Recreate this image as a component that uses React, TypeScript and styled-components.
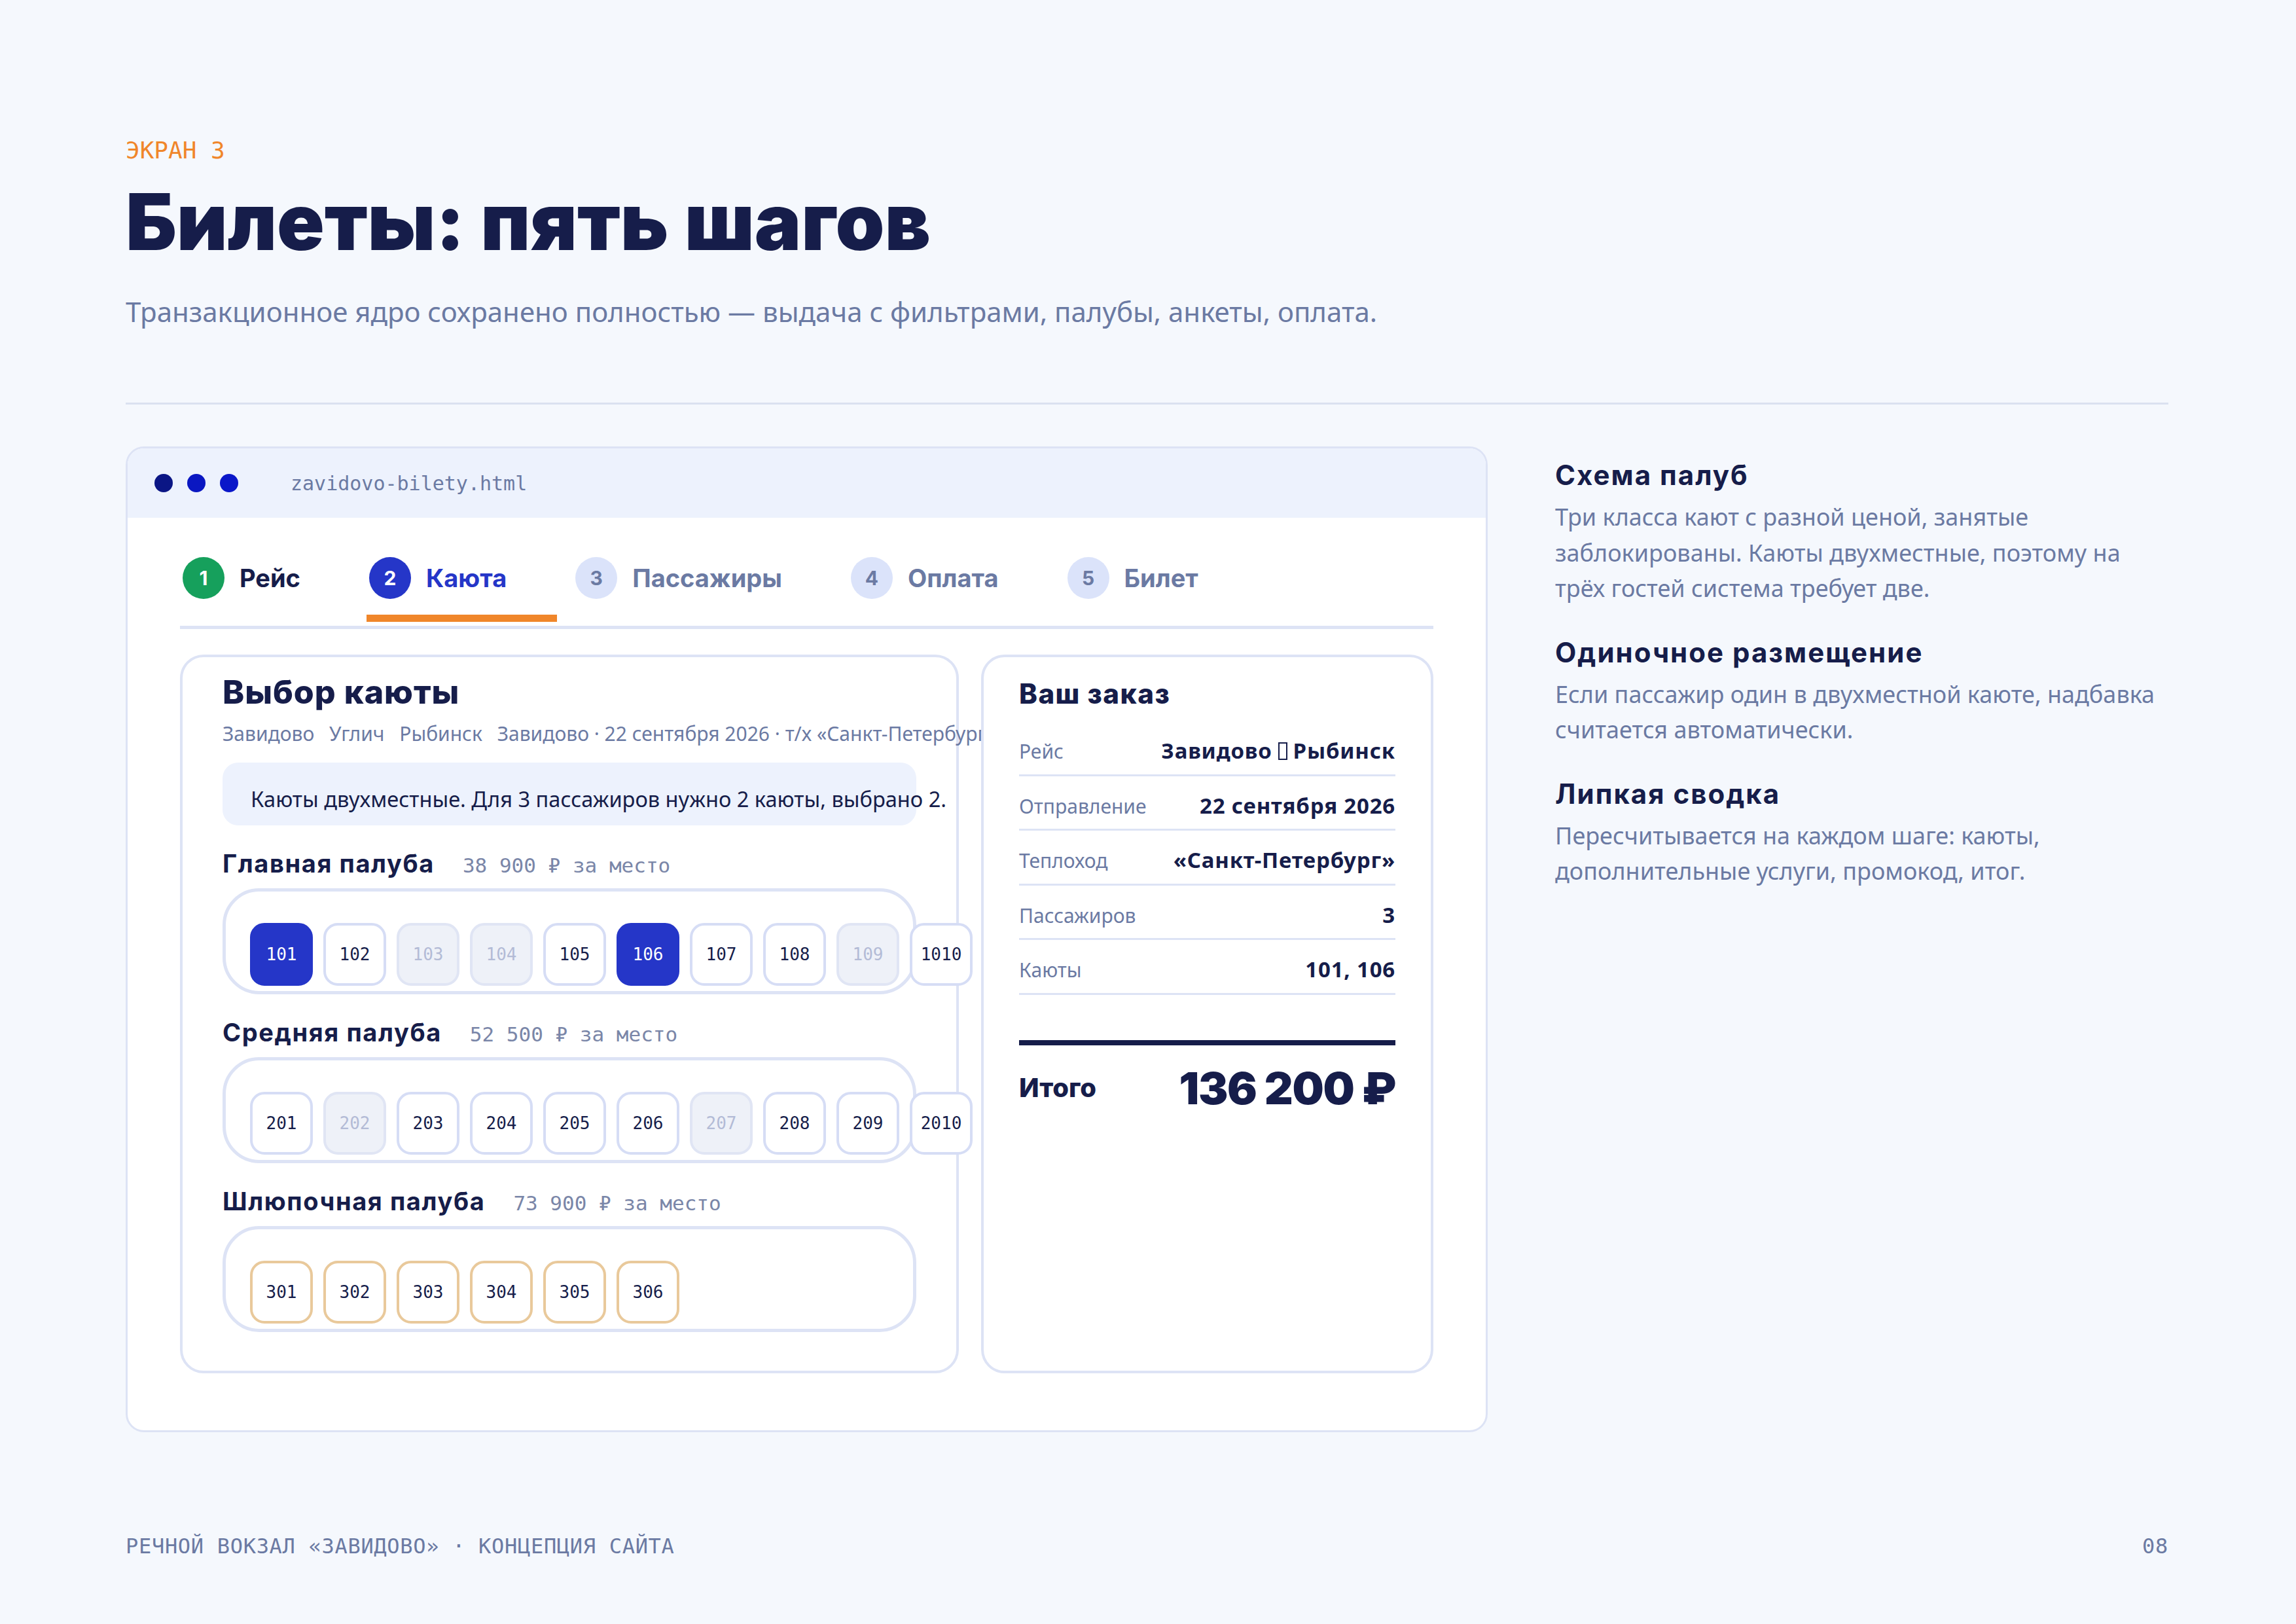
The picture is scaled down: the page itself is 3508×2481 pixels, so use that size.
import styled, { createGlobalStyle, css } from "styled-components";

const HEAD = `Inter, "Noto Sans", sans-serif`;
const BODY = `"Noto Sans", "Open Sans", sans-serif`;
const MONO = `"DejaVu Sans Mono", "Liberation Mono", monospace`;

const NAVY = "#161d4a";
const MUTED = "#6b7aa3";
const LINE = "#dde3f5";
const BLUE = "#2536c8";
const ORANGE = "#f0862a";

type StepState = "done" | "active" | "todo";
type CabinState = "free" | "taken" | "picked" | "gold";

interface Deck {
  name: string;
  price: string;
  cabins: { num: string; state: CabinState }[];
}

const steps: { n: number; label: string; state: StepState }[] = [
  { n: 1, label: "Рейс", state: "done" },
  { n: 2, label: "Каюта", state: "active" },
  { n: 3, label: "Пассажиры", state: "todo" },
  { n: 4, label: "Оплата", state: "todo" },
  { n: 5, label: "Билет", state: "todo" },
];

// номер каюты всегда собирается как палуба + "0" + порядковый
const makeCabins = (
  deck: number,
  count: number,
  taken: number[],
  picked: number[],
  base: CabinState = "free"
) =>
  Array.from({ length: count }, (_, i) => {
    const n = i + 1;
    let state: CabinState = base;
    if (taken.includes(n)) state = "taken";
    if (picked.includes(n)) state = "picked";
    return { num: `${deck}0${n}`, state };
  });

const decks: Deck[] = [
  {
    name: "Главная палуба",
    price: "38 900 ₽ за место",
    cabins: makeCabins(1, 10, [3, 4, 9], [1, 6]),
  },
  {
    name: "Средняя палуба",
    price: "52 500 ₽ за место",
    cabins: makeCabins(2, 10, [2, 7], []),
  },
  {
    name: "Шлюпочная палуба",
    price: "73 900 ₽ за место",
    cabins: makeCabins(3, 6, [], [], "gold"),
  },
];

const GlobalStyle = createGlobalStyle`
  * { box-sizing: border-box; }
  html, body {
    margin: 0;
    padding: 0;
    background: #f5f8fd;
  }
  body {
    width: 3508px;
    height: 2481px;
    overflow: hidden;
    font-family: ${BODY};
    color: ${NAVY};
  }
`;

const Page = styled.div`
  width: 3508px;
  height: 2481px;
  padding: 208px 195px 0 192px;
  display: flex;
  flex-direction: column;
`;

const Eyebrow = styled.div`
  font-family: ${MONO};
  font-size: 36px;
  line-height: 44px;
  color: ${ORANGE};
`;

const Title = styled.h1`
  margin: 27px 0 0;
  font-family: ${HEAD};
  font-weight: 900;
  font-size: 120px;
  line-height: 120px;
  letter-spacing: 0;
  color: ${NAVY};
`;

const Lead = styled.p`
  margin: 49px 0 0;
  font-size: 42px;
  line-height: 56px;
  color: ${MUTED};
`;

const Rule = styled.div`
  margin-top: 111px;
  height: 3px;
  background: #dbe1f0;
`;

const Main = styled.div`
  margin-top: 64px;
  display: flex;
  gap: 103px;
  align-items: flex-start;
`;

const Browser = styled.div`
  width: 2081px;
  flex-shrink: 0;
  background: #fff;
  border: 3px solid ${LINE};
  border-radius: 28px;
  overflow: hidden;
`;

const BrowserBar = styled.div`
  height: 106px;
  background: #edf2fd;
  display: flex;
  align-items: center;
  padding-left: 41px;
`;

const Dots = styled.div`
  display: flex;
  gap: 22px;
`;

const Dot = styled.span<{ $color: string }>`
  width: 28px;
  height: 28px;
  border-radius: 50%;
  background: ${(p) => p.$color};
`;

const Url = styled.span`
  margin-left: 80px;
  font-family: ${MONO};
  font-size: 30px;
  color: ${MUTED};
`;

const BrowserBody = styled.div`
  padding: 60px 80px 87px;
`;

const Steps = styled.div`
  display: flex;
  gap: 24px;
  border-bottom: 5px solid ${LINE};
`;

const Step = styled.div<{ $state: StepState }>`
  position: relative;
  display: flex;
  align-items: center;
  gap: 23px;
  padding: 0 77px 41px 4px;

  ${(p) =>
    p.$state === "active" &&
    css`
      &::after {
        content: "";
        position: absolute;
        left: 0;
        right: 0;
        bottom: 6px;
        height: 11px;
        background: ${ORANGE};
      }
    `}
`;

const circleColors: Record<StepState, [string, string]> = {
  done: ["#16a05c", "#fff"],
  active: [BLUE, "#fff"],
  todo: ["#dbe3fa", MUTED],
};

const labelColors: Record<StepState, string> = {
  done: NAVY,
  active: BLUE,
  todo: MUTED,
};

const StepCircle = styled.span<{ $state: StepState }>`
  width: 64px;
  height: 64px;
  border-radius: 50%;
  display: flex;
  align-items: center;
  justify-content: center;
  font-family: ${HEAD};
  font-weight: 700;
  font-size: 30px;
  background: ${(p) => circleColors[p.$state][0]};
  color: ${(p) => circleColors[p.$state][1]};
`;

const StepLabel = styled.span<{ $state: StepState }>`
  font-family: ${HEAD};
  font-weight: 700;
  font-size: 38px;
  line-height: 1;
  color: ${(p) => labelColors[p.$state]};
`;

const Cards = styled.div`
  margin-top: 39px;
  display: flex;
  gap: 34px;
`;

const CabinCard = styled.div`
  width: 1190px;
  flex-shrink: 0;
  border: 4px solid ${LINE};
  border-radius: 36px;
  padding: 27px 61px 59px;
  background: #fff;
`;

const CardTitle = styled.h2`
  margin: 0;
  font-family: ${HEAD};
  font-weight: 800;
  font-size: 50px;
  line-height: 52px;
  letter-spacing: 1px;
  color: ${NAVY};
`;

const Route = styled.div`
  margin-top: 18px;
  font-size: 30px;
  line-height: 40px;
  color: ${MUTED};
  white-space: pre;
`;

const Notice = styled.div`
  margin-top: 24px;
  padding: 34px 43px 18px;
  background: #edf2fd;
  border-radius: 24px;
  font-size: 32.6px;
  line-height: 44px;
  white-space: nowrap;
  color: ${NAVY};
`;

const DeckHead = styled.div`
  margin-top: 34px;
  display: flex;
  align-items: baseline;
  gap: 43px;
`;

const DeckName = styled.span`
  font-family: ${HEAD};
  font-weight: 700;
  font-size: 38px;
  line-height: 48px;
  letter-spacing: 1.6px;
  color: ${NAVY};
`;

const DeckPrice = styled.span`
  font-family: ${MONO};
  font-size: 31px;
  color: #7a86a8;
`;

const DeckBox = styled.div`
  margin-top: 14px;
  border: 5px solid ${LINE};
  border-radius: 56px;
  padding: 48px 37px 8px;
  display: flex;
  gap: 16px;
`;

const cabinLook: Record<CabinState, ReturnType<typeof css>> = {
  free: css`
    background: #fff;
    border-color: #d6ddf5;
    color: ${NAVY};
  `,
  taken: css`
    background: #eef1f8;
    border-color: #e0e5f4;
    color: #b3bbd6;
  `,
  picked: css`
    background: ${BLUE};
    border-color: ${BLUE};
    color: #fff;
  `,
  gold: css`
    background: #fff;
    border-color: #e9c99b;
    color: ${NAVY};
  `,
};

const Cabin = styled.div<{ $state: CabinState }>`
  width: 96px;
  height: 96px;
  flex-shrink: 0;
  border: 4px solid;
  border-radius: 22px;
  display: flex;
  align-items: center;
  justify-content: center;
  font-family: ${MONO};
  font-size: 26px;
  ${(p) => cabinLook[p.$state]}
`;

const OrderCard = styled.div`
  position: relative;
  flex: 1;
  border: 4px solid ${LINE};
  border-radius: 36px;
  padding: 32px 54px;
  background: #fff;
`;

const OrderTitle = styled.h3`
  margin: 0 0 18px;
  font-family: ${HEAD};
  font-weight: 800;
  font-size: 42px;
  line-height: 48px;
  letter-spacing: 1.5px;
  color: ${NAVY};
`;

const Row = styled.div`
  display: flex;
  justify-content: space-between;
  align-items: baseline;
  padding: 25px 0 14.5px;
  line-height: 40px;
  border-bottom: 3px solid ${LINE};
`;

const RowLabel = styled.span`
  font-size: 30px;
  color: ${MUTED};
`;

const RowValue = styled.span`
  font-size: 33px;
  font-weight: 700;
  letter-spacing: 0.8px;
  color: ${NAVY};
`;

const Tofu = styled.span`
  display: inline-block;
  width: 14px;
  height: 27px;
  margin: 0 9px;
  border: 2px solid ${NAVY};
  vertical-align: -2px;
`;

const Total = styled.div`
  margin-top: 69px;
  border-top: 8px solid ${NAVY};
  padding-top: 25px;
  display: flex;
  justify-content: space-between;
  align-items: center;
`;

const TotalLabel = styled.span`
  font-family: ${HEAD};
  font-weight: 800;
  font-size: 40px;
  color: ${NAVY};
`;

const TotalValue = styled.span`
  font-family: ${HEAD};
  font-weight: 900;
  font-size: 68px;
  line-height: 80px;
  letter-spacing: -0.02em;
  color: ${NAVY};
`;

const Notes = styled.div`
  width: 937px;
  padding-top: 20px;
  display: flex;
  flex-direction: column;
  gap: 46px;
`;

const NoteTitle = styled.h4`
  margin: 0;
  font-family: ${HEAD};
  font-weight: 700;
  font-size: 42px;
  line-height: 48px;
  letter-spacing: 2px;
  color: ${NAVY};
`;

const NoteText = styled.p`
  margin: 13px 0 0;
  font-size: 36px;
  line-height: 54.5px;
  color: ${MUTED};
`;

const Footer = styled.div`
  margin-top: 154px;
  display: flex;
  justify-content: space-between;
  font-family: ${MONO};
  font-size: 32px;
  line-height: 40px;
  letter-spacing: 0.7px;
  color: ${MUTED};
`;

const orderRows: [string, React.ReactNode][] = [
  [
    "Рейс",
    <>
      Завидово
      <Tofu />
      Рыбинск
    </>,
  ],
  ["Отправление", "22 сентября 2026"],
  ["Теплоход", "«Санкт-Петербург»"],
  ["Пассажиров", "3"],
  ["Каюты", "101, 106"],
];

const notes = [
  {
    title: "Схема палуб",
    text: "Три класса кают с разной ценой, занятые заблокированы. Каюты двухместные, поэтому на трёх гостей система требует две.",
  },
  {
    title: "Одиночное размещение",
    text: "Если пассажир один в двухместной каюте, надбавка считается автоматически.",
  },
  {
    title: "Липкая сводка",
    text: "Пересчитывается на каждом шаге: каюты, дополнительные услуги, промокод, итог.",
  },
];

export default function App() {
  return (
    <>
      <GlobalStyle />
      <Page>
        <Eyebrow>ЭКРАН 3</Eyebrow>
        <Title>Билеты: пять шагов</Title>
        <Lead>
          Транзакционное ядро сохранено полностью — выдача с фильтрами, палубы,
          анкеты, оплата.
        </Lead>
        <Rule />

        <Main>
          <Browser>
            <BrowserBar>
              <Dots>
                <Dot $color="#0b1685" />
                <Dot $color="#0a17c2" />
                <Dot $color="#0a17c9" />
              </Dots>
              <Url>zavidovo-bilety.html</Url>
            </BrowserBar>

            <BrowserBody>
              <Steps>
                {steps.map((s) => (
                  <Step key={s.n} $state={s.state}>
                    <StepCircle $state={s.state}>{s.n}</StepCircle>
                    <StepLabel $state={s.state}>{s.label}</StepLabel>
                  </Step>
                ))}
              </Steps>

              <Cards>
                <CabinCard>
                  <CardTitle>Выбор каюты</CardTitle>
                  <Route>
                    {"Завидово\u2002 Углич\u2002 Рыбинск\u2002 Завидово · 22 сентября 2026 · т/х «Санкт-Петербург»"}
                  </Route>
                  <Notice>
                    Каюты двухместные. Для 3 пассажиров нужно 2 каюты, выбрано 2.
                  </Notice>
                  {decks.map((d) => (
                    <div key={d.name}>
                      <DeckHead>
                        <DeckName>{d.name}</DeckName>
                        <DeckPrice>{d.price}</DeckPrice>
                      </DeckHead>
                      <DeckBox>
                        {d.cabins.map((c) => (
                          <Cabin key={c.num} $state={c.state}>
                            {c.num}
                          </Cabin>
                        ))}
                      </DeckBox>
                    </div>
                  ))}
                </CabinCard>

                <OrderCard>
                  <OrderTitle>Ваш заказ</OrderTitle>
                  {orderRows.map(([label, value]) => (
                    <Row key={label}>
                      <RowLabel>{label}</RowLabel>
                      <RowValue>{value}</RowValue>
                    </Row>
                  ))}
                  <Total>
                    <TotalLabel>Итого</TotalLabel>
                    <TotalValue>136 200 ₽</TotalValue>
                  </Total>
                </OrderCard>
              </Cards>
            </BrowserBody>
          </Browser>

          <Notes>
            {notes.map((n) => (
              <div key={n.title}>
                <NoteTitle>{n.title}</NoteTitle>
                <NoteText>{n.text}</NoteText>
              </div>
            ))}
          </Notes>
        </Main>

        <Footer>
          <span>РЕЧНОЙ ВОКЗАЛ «ЗАВИДОВО» · КОНЦЕПЦИЯ САЙТА</span>
          <span>08</span>
        </Footer>
      </Page>
    </>
  );
}
